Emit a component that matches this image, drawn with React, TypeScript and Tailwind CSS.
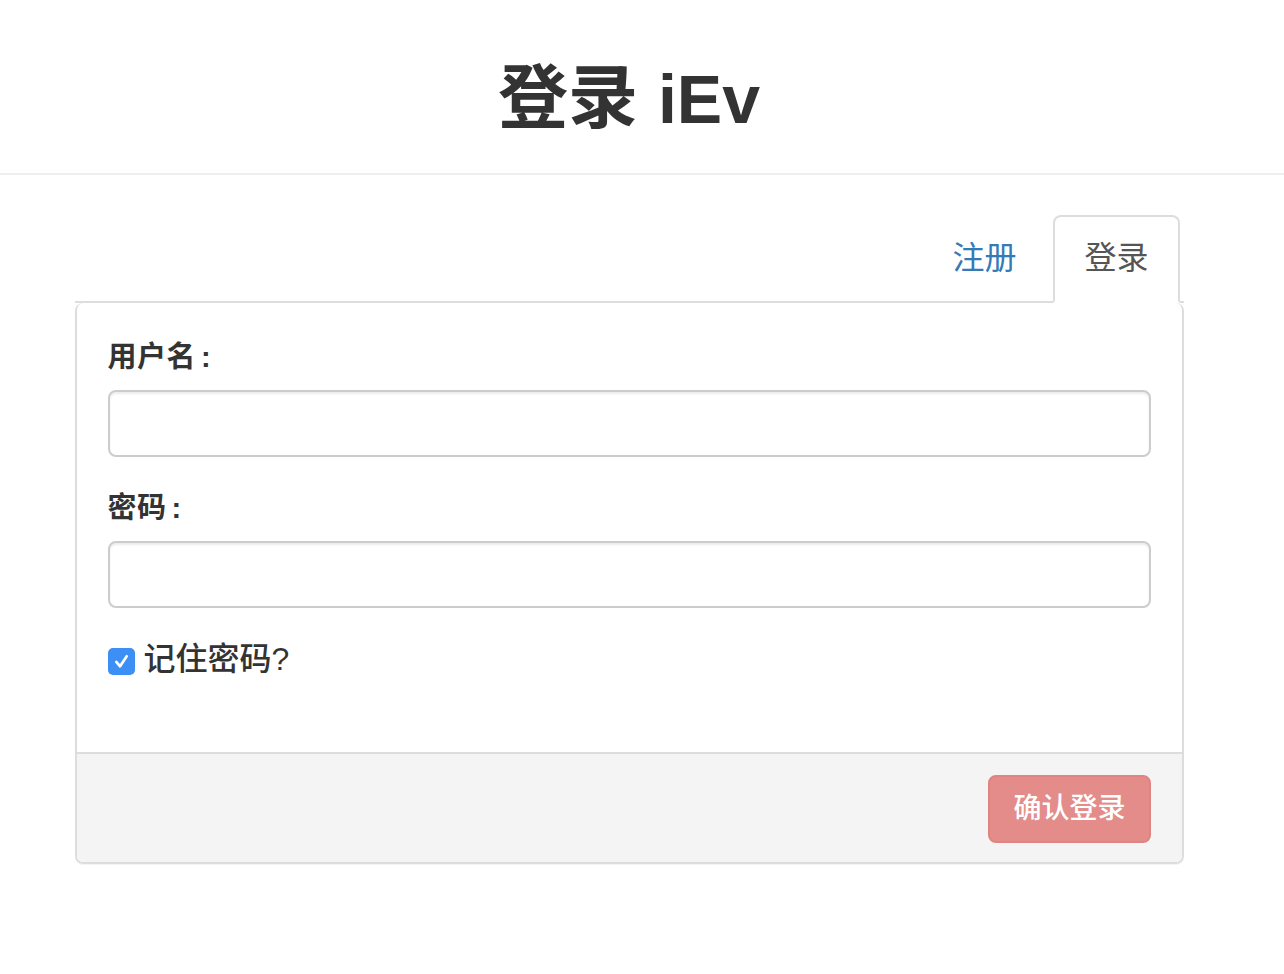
import React from "react";

const font = {
  fontFamily: '"Liberation Sans", "Noto Sans CJK SC", sans-serif',
};

const FormField: React.FC<{ label: string; type?: string }> = ({
  label,
  type = "text",
}) => {
  return (
    <div className="mb-[30px]">
      <label className="block text-[29px] leading-[42px] font-semibold tracking-[0.5px] text-[#333] mb-[12px]">
        {label}
        <span className="ml-[5px]">:</span>
      </label>
      <input
        type={type}
        className="block w-full h-[67px] rounded-[8px] border-2 border-[#ccc] bg-white px-[24px] text-[28px] outline-none shadow-[inset_0_2px_2px_rgba(0,0,0,0.075)]"
      />
    </div>
  );
};

const App: React.FC = () => {
  return (
    <div className="min-h-[974px] bg-white text-[#333]" style={font}>
      <div className="border-b-2 border-[#eee]">
        <div className="w-[1258px] pt-[59px] pb-[34px] text-center">
          <h1 className="text-[72px] leading-[79px] font-bold text-[#333]">
            <span className="text-[70px]">登录</span>{" "}
            <span className="text-[68px]">iEv</span>
          </h1>
        </div>
      </div>

      <div className="w-[1258px]">
        <div className="mx-auto w-[1109px] mt-[40px]">
          <ul className="flex justify-end gap-[5px] border-b-2 border-[#ddd] pr-[4px]">
            <li className="-mb-[2px]">
              <a
                href="#"
                className="block border-2 border-transparent rounded-t-[8px] px-[30px] pt-[20px] pb-[22px] text-[32px] leading-[42px] text-[#337ab7]"
              >
                注册
              </a>
            </li>
            <li className="-mb-[2px]">
              <a
                href="#"
                className="block border-2 border-[#ddd] border-b-white rounded-t-[8px] bg-white px-[29px] pt-[20px] pb-[22px] text-[32px] leading-[42px] text-[#555]"
              >
                登录
              </a>
            </li>
          </ul>

          <div className="border-x-2 border-b-2 border-[#ddd] rounded-[8px] shadow-[0_1px_1px_rgba(0,0,0,0.05)] overflow-hidden">
            <div className="px-[31px] pt-[33px] pb-[72px]">
              <FormField label="用户名" />
              <FormField label="密码" type="password" />
              <label className="flex items-center gap-[9px] text-[32px] leading-[42px] font-medium text-[#333]">
                <span className="mt-[5px] flex h-[27px] w-[27px] items-center justify-center rounded-[5px] bg-[#3b8ff5]">
                  <svg
                    width="19"
                    height="19"
                    viewBox="0 0 20 20"
                    fill="none"
                    stroke="white"
                    strokeWidth="2.8"
                    strokeLinecap="round"
                    strokeLinejoin="round"
                  >
                    <path d="M4.5 10.5 L8.5 15 L15.5 4.5" />
                  </svg>
                </span>
                记住密码?
              </label>
            </div>
            <div className="flex justify-end border-t-2 border-[#ddd] bg-[#f4f4f4] px-[31px] pt-[21px] pb-[19px]">
              <button
                type="button"
                className="rounded-[8px] border-2 border-[#e08481] bg-[#e38c89] px-[23px] py-[12px] text-[28px] leading-[40px] font-medium text-white"
              >
                确认登录
              </button>
            </div>
          </div>
        </div>
      </div>
    </div>
  );
};

export default App;
